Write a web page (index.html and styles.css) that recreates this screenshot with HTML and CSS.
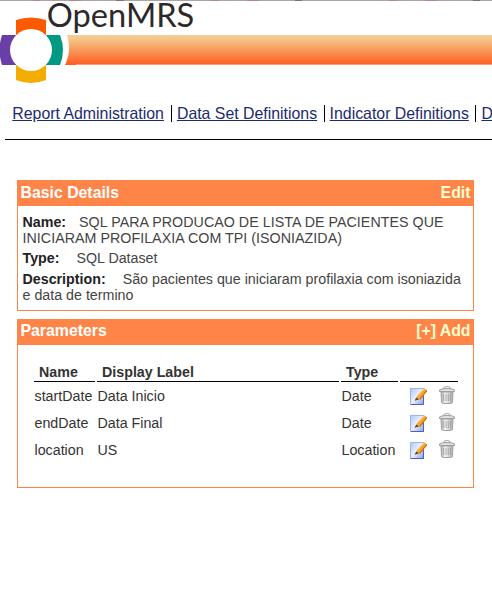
FILE: index.html
```html
<!DOCTYPE html>
<html lang="pt">
<head>
<meta charset="utf-8">
<title>OpenMRS</title>
<link rel="stylesheet" href="styles.css">
</head>
<body>
<svg class="defs" width="0" height="0" aria-hidden="true">
  <defs>
    <linearGradient id="banner" x1="0" y1="0" x2="0" y2="1"><stop offset="0" stop-color="#f3cf94"/><stop offset=".12" stop-color="#f4c88b"/><stop offset="1" stop-color="#ff5c1e"/></linearGradient>
    <linearGradient id="paper" x1="0" y1="0" x2="1" y2="1"><stop offset="0" stop-color="#a9c8fb"/><stop offset=".5" stop-color="#edf1ff"/><stop offset="1" stop-color="#8c9be6"/></linearGradient>
    <linearGradient id="metal"><stop offset="0" stop-color="#aaa"/><stop offset=".35" stop-color="#f4f4f4"/><stop offset="1" stop-color="#aaa"/></linearGradient>
    <symbol id="edit" viewBox="0 0 17 18">
      <rect x=".5" y="1.500" width="13" height="16" fill="url(#paper)" stroke="#9db4ec"/>
      <path d="M13.500 9v8.500H1" fill="none" stroke="#4b60b8"/>
      <path d="M5 13 7.500 8.500 14 1.300 17 3.300 10 12.500z" fill="#f9a62c"/>
      <path d="M9.800 12.300 16.800 3.500" fill="none" stroke="#b86c18" stroke-width="1.200"/>
      <path d="M8 8.600 14.200 1.800" fill="none" stroke="#ffd36c"/>
      <path d="m4.500 13.800 1.800-3.300 2.700 2z" fill="#5d4a3f"/>
    </symbol>
    <symbol id="trash" viewBox="0 0 16 18">
      <path d="M5 3V1.200Q8-.3 11 1.200V3" fill="none" stroke="#aaa"/>
      <path d="M.5 5.500V4Q2 2.500 8 2.500T15.500 4v1.500z" fill="#e2e2e2" stroke="#9d9d9d"/>
      <path d="M2 6h12l-.5 10.200q-.4 1.300-2 1.300h-7q-1.600 0-2-1.300z" fill="url(#metal)" stroke="#a2a2a2"/>
      <path d="M4.500 8l.3 7M7 8v7M9.300 8v7M11.600 8l-.3 7" stroke="#9c9c9c" stroke-width=".8"/>
    </symbol>
  </defs>
</svg>
<header class="banner">
  <svg width="492" height="90" viewBox="0 0 492 90">
    <rect width="492" height="1" fill="#aaa5a8"/>
    <path d="M33 .5h7M69 .5h12M211 .5h8M247 .5h12M389 .5h8M425 .5h12" stroke="#b4849d"/>
    <path d="M116 .5h8M295 .5h7M473 .5h7" stroke="#777074"/>
    <path d="M67 35H492V65H65Q72 50 67 35Z" fill="url(#banner)"/>
    <path d="M76 64.500H492" stroke="#ff9b76"/>
    <path d="M16 35V20Q31 15 46 20V35Z" fill="#ff5a00"/>
    <path d="M16 65V80Q31 86 46 80V65Z" fill="#f3ac00"/>
    <path d="M16 35H2Q-3 50 2 65H16Z" fill="#693fa7"/>
    <path d="M46 35H60Q66 50 60 65H46Z" fill="#009984"/>
    <circle cx="31" cy="50" r="21" fill="#fff"/>
    <text class="wordmark" x="46.800" y="27" textLength="147.500" lengthAdjust="spacingAndGlyphs">OpenMRS</text>
  </svg>
</header>
<nav class="menu">
  <a href="#">Report Administration</a>
  <a href="#">Data Set Definitions</a>
  <a href="#">Indicator Definitions</a>
  <a href="#">Dimension Definitions</a>
</nav>
<main>
  <section class="box details">
    <h2><span>Basic Details</span><a href="#">Edit</a></h2>
    <div class="body">
      <p class="title"><b>Name:</b>SQL PARA PRODUCAO DE LISTA DE PACIENTES QUE INICIARAM PROFILAXIA COM TPI (ISONIAZIDA)</p>
      <p><b>Type:</b>SQL Dataset</p>
      <p><b>Description:</b>São pacientes que iniciaram profilaxia com isoniazida e data de termino</p>
    </div>
  </section>
  <section class="box params">
    <h2><span>Parameters</span><a href="#">[+] Add</a></h2>
    <table>
      <colgroup><col class="c1"><col class="c2"><col class="c3"><col class="c4"></colgroup>
      <thead><tr><th>Name</th><th>Display Label</th><th>Type</th><th></th></tr></thead>
      <tbody>
        <tr><td>startDate</td><td>Data Inicio</td><td>Date</td><td><div class="actions"><svg class="edit"><use href="#edit"/></svg><svg class="trash"><use href="#trash"/></svg></div></td></tr>
        <tr><td>endDate</td><td>Data Final</td><td>Date</td><td><div class="actions"><svg class="edit"><use href="#edit"/></svg><svg class="trash"><use href="#trash"/></svg></div></td></tr>
        <tr><td>location</td><td>US</td><td>Location</td><td><div class="actions"><svg class="edit"><use href="#edit"/></svg><svg class="trash"><use href="#trash"/></svg></div></td></tr>
      </tbody>
    </table>
  </section>
</main>
</body>
</html>
```
FILE: styles.css
```css
* { box-sizing: border-box; }
html { overflow: hidden; }
body { margin: 0; background: #fff; color: #444; font-family: "Liberation Sans", Arial, sans-serif; }
.defs { position: absolute; }
.banner { height: 90px; }
.banner svg { display: block; }
.wordmark { font: 400 33px Lato, sans-serif; fill: #2d292a; }
.menu { display: flex; height: 50px; margin-left: 5px; padding: 15px 0 0 7.300px; border-bottom: 1px solid #000; overflow: hidden; white-space: nowrap; }
.menu a { flex: none; height: 17px; margin-right: 6.500px; color: #1c2b70; font-size: 15.860px; line-height: 17px; }
.menu a:first-child { margin-right: 7px; }
.menu a + a { padding-left: 5px; border-left: 1px solid #000; }
main { width: 457px; margin: 40px 0 0 17px; }
.box { border: 1px solid #ff8448; }
.details { height: 131px; }
.params { height: 169px; margin-top: 8px; }
h2 { display: flex; justify-content: space-between; height: 25px; margin: 0; padding: 0 2.500px; background: #ff8448; color: #fff; font-size: 15.840px; line-height: 23px; }
.params h2 { line-height: 21px; }
h2 a { color: #ffffce; text-decoration: none; }
.body { padding: 8px 4.500px; font-size: 14.260px; line-height: 16px; }
p { margin: 0 0 4.400px; }
p b { margin-right: 17px; color: #222; }
.title { letter-spacing: .035px; }
.title b { margin-right: 13px; letter-spacing: 0; }
table { width: 428px; margin: 16px 0 0 14px; table-layout: fixed; border-spacing: 2px; font-size: 14.260px; line-height: 17px; color: #333; }
.c1 { width: 61px; }
.c2 { width: 242px; }
.c3 { width: 57px; }
.c4 { width: 58px; }
th { height: 19px; padding: 0 5px; border-bottom: 1px solid #000; text-align: left; }
td { height: 25px; padding: 0 0 0 .5px; white-space: nowrap; }
.actions { display: flex; align-items: center; height: 20px; margin-bottom: 2px; padding-left: 9px; gap: 12px; }
.edit { width: 17px; height: 18px; }
.trash { width: 16px; height: 18px; margin-top: -1px; }
```
